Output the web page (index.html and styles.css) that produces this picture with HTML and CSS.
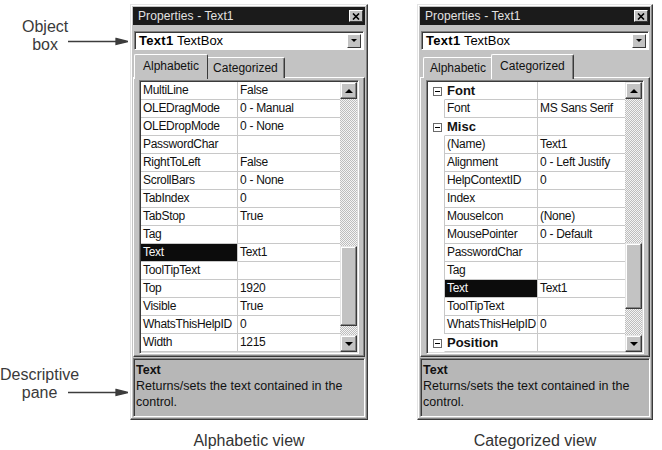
FILE: index.html
```html
<!DOCTYPE html>
<html lang="en">
<head>
    <meta charset="UTF-8">
    <meta name="viewport" content="width=device-width, initial-scale=1.0">
    <title>Properties Window</title>
    <link rel="stylesheet" href="styles.css">
</head>
<body>

    <div class="page">
        <div class="callouts">
            <div class="callout callout-object">
                <div class="callout-text">Object<br>box</div>
                <svg class="arrow" width="60" height="9" viewBox="0 0 60 9">
                    <line x1="0" y1="4.5" x2="50" y2="4.5"/>
                    <polygon points="48,1.5 60,4.5 48,7.5"/>
                </svg>
            </div>
            <div class="callout callout-desc">
                <div class="callout-text">Descriptive<br>pane</div>
                <svg class="arrow" width="60" height="9" viewBox="0 0 60 9">
                    <line x1="0" y1="4.5" x2="50" y2="4.5"/>
                    <polygon points="48,1.5 60,4.5 48,7.5"/>
                </svg>
            </div>
        </div>

        <!-- alphabetic view -->
        <div class="view view-alpha">
            <div class="propwin">
                <div class="titlebar">
                    <span class="title">Properties - Text1</span>
                    <span class="closebtn">
                        <svg width="8" height="7" viewBox="0 0 8 7"><path d="M1 0.5 L7 6.5 M7 0.5 L1 6.5"/></svg>
                    </span>
                </div>
                <div class="objbox">
                    <span class="objname"><b>Text1</b> TextBox</span>
                    <span class="dropbtn"><span class="tri-down small"></span></span>
                </div>
                <div class="tabs">
                    <span class="tab tab-active">Alphabetic</span>
                    <span class="tab tab-edge">Categorized</span>
                </div>
                <div class="tabpage">
                    <div class="grid">
                        <div class="props props-alpha">
                            <div class="row"><span class="cell name">MultiLine</span><span class="cell">False</span></div>
                            <div class="row"><span class="cell name">OLEDragMode</span><span class="cell">0 - Manual</span></div>
                            <div class="row"><span class="cell name">OLEDropMode</span><span class="cell">0 - None</span></div>
                            <div class="row"><span class="cell name">PasswordChar</span><span class="cell"></span></div>
                            <div class="row"><span class="cell name">RightToLeft</span><span class="cell">False</span></div>
                            <div class="row"><span class="cell name">ScrollBars</span><span class="cell">0 - None</span></div>
                            <div class="row"><span class="cell name">TabIndex</span><span class="cell">0</span></div>
                            <div class="row"><span class="cell name">TabStop</span><span class="cell">True</span></div>
                            <div class="row"><span class="cell name">Tag</span><span class="cell"></span></div>
                            <div class="row"><span class="cell name selected">Text</span><span class="cell">Text1</span></div>
                            <div class="row"><span class="cell name">ToolTipText</span><span class="cell"></span></div>
                            <div class="row"><span class="cell name">Top</span><span class="cell">1920</span></div>
                            <div class="row"><span class="cell name">Visible</span><span class="cell">True</span></div>
                            <div class="row"><span class="cell name">WhatsThisHelpID</span><span class="cell">0</span></div>
                            <div class="row"><span class="cell name">Width</span><span class="cell">1215</span></div>
                        </div>
                        <div class="vscroll">
                            <span class="sbtn"><span class="tri-up"></span></span>
                            <span class="track track-alpha"></span>
                            <span class="thumb thumb-alpha"></span>
                            <span class="track track-fill"></span>
                            <span class="sbtn"><span class="tri-down"></span></span>
                        </div>
                    </div>
                </div>
                <div class="desc">
                    <b>Text</b>
                    <p>Returns/sets the text contained in the control.</p>
                </div>
            </div>
            <div class="caption">Alphabetic view</div>
        </div>

        <!-- categorized view -->
        <div class="view view-cat">
            <div class="propwin">
                <div class="titlebar">
                    <span class="title">Properties - Text1</span>
                    <span class="closebtn">
                        <svg width="8" height="7" viewBox="0 0 8 7"><path d="M1 0.5 L7 6.5 M7 0.5 L1 6.5"/></svg>
                    </span>
                </div>
                <div class="objbox">
                    <span class="objname"><b>Text1</b> TextBox</span>
                    <span class="dropbtn"><span class="tri-down small"></span></span>
                </div>
                <div class="tabs">
                    <span class="tab">Alphabetic</span>
                    <span class="tab tab-active tab-edge">Categorized</span>
                </div>
                <div class="tabpage">
                    <div class="grid">
                        <div class="props props-cat">
                            <div class="row cat"><span class="indent"><span class="minus"></span></span><span class="cell name">Font</span><span class="cell"></span></div>
                            <div class="row"><span class="indent"></span><span class="cell name">Font</span><span class="cell">MS Sans Serif</span></div>
                            <div class="row cat"><span class="indent"><span class="minus"></span></span><span class="cell name">Misc</span><span class="cell"></span></div>
                            <div class="row"><span class="indent"></span><span class="cell name">(Name)</span><span class="cell">Text1</span></div>
                            <div class="row"><span class="indent"></span><span class="cell name">Alignment</span><span class="cell">0 - Left Justify</span></div>
                            <div class="row"><span class="indent"></span><span class="cell name">HelpContextID</span><span class="cell">0</span></div>
                            <div class="row"><span class="indent"></span><span class="cell name">Index</span><span class="cell"></span></div>
                            <div class="row"><span class="indent"></span><span class="cell name">MouseIcon</span><span class="cell">(None)</span></div>
                            <div class="row"><span class="indent"></span><span class="cell name">MousePointer</span><span class="cell">0 - Default</span></div>
                            <div class="row"><span class="indent"></span><span class="cell name">PasswordChar</span><span class="cell"></span></div>
                            <div class="row"><span class="indent"></span><span class="cell name">Tag</span><span class="cell"></span></div>
                            <div class="row"><span class="indent"></span><span class="cell name selected">Text</span><span class="cell">Text1</span></div>
                            <div class="row"><span class="indent"></span><span class="cell name">ToolTipText</span><span class="cell"></span></div>
                            <div class="row"><span class="indent"></span><span class="cell name">WhatsThisHelpID</span><span class="cell">0</span></div>
                            <div class="row cat"><span class="indent"><span class="minus"></span></span><span class="cell name">Position</span><span class="cell"></span></div>
                        </div>
                        <div class="vscroll">
                            <span class="sbtn"><span class="tri-up"></span></span>
                            <span class="track track-cat"></span>
                            <span class="thumb thumb-cat"></span>
                            <span class="track track-fill"></span>
                            <span class="sbtn"><span class="tri-down"></span></span>
                        </div>
                    </div>
                </div>
                <div class="desc">
                    <b>Text</b>
                    <p>Returns/sets the text contained in the control.</p>
                </div>
            </div>
            <div class="caption">Categorized view</div>
        </div>
    </div>

</body>
</html>
```

FILE: styles.css
```css
body{
    margin: 0;
    background-color: #fff;
    font-family: "Liberation Sans", Arial, sans-serif;
}
.page{
    display: flex;
    align-items: flex-start;
    width: 662px;
    height: 450px;
    overflow: hidden;
}

/* labels with arrows on the left */
.callouts{
    width: 130px;
    flex-shrink: 0;
    display: flex;
    flex-direction: column;
    font-size: 16px;
    line-height: 18px;
    color: #3a3a3a;
}
.callout{
    display: flex;
    align-items: flex-start;
}
.callout-text{
    text-align: center;
    white-space: nowrap;
}
.arrow{
    flex-shrink: 0;
    stroke: #3c3c3c;
    stroke-width: 1.3;
    fill: #3c3c3c;
}
.callout-object{
    margin-top: 18px;
    padding-left: 22px;
}
.callout-object .arrow{
    margin-top: 18.5px;
}
.callout-desc{
    margin-top: 312px;
}
.callout-desc .arrow{
    margin-top: 21.5px;
    margin-left: -11px;
}

.view{
    display: flex;
    flex-direction: column;
    flex-shrink: 0;
}
.view-alpha{
    width: 238px;
}
.view-cat{
    width: 236px;
    margin-left: 49px;
}
.caption{
    margin-top: 11px;
    font-size: 16px;
    line-height: 20px;
    text-align: center;
    color: #333;
}

/* the properties window */
.propwin{
    margin-top: 4px;
    padding: 2px;
    background-color: #c3c3c3;
    border: 1px solid;
    border-color: #e4e4e4 #3a3a3a #3a3a3a #e4e4e4;
    box-shadow: inset -1px -1px #858585, inset 1px 1px #fff;
    font-size: 12px;
}
.titlebar{
    height: 18px;
    display: flex;
    align-items: center;
    justify-content: space-between;
    padding: 0 2px 0 5px;
    background-color: #1b1b1b;
    color: #e2e2e2;
    letter-spacing: 0.1px;
}
.closebtn{
    width: 14px;
    height: 12px;
    box-sizing: border-box;
    display: flex;
    align-items: center;
    justify-content: center;
    background-color: #c3c3c3;
    border: 1px solid;
    border-color: #fff #3a3a3a #3a3a3a #fff;
}
.closebtn svg{
    stroke: #000;
    stroke-width: 1.6;
}
.objbox{
    height: 19px;
    box-sizing: border-box;
    margin: 6px 1px 0;
    display: flex;
    align-items: center;
    justify-content: space-between;
    padding: 0 2px 0 4px;
    background-color: #fff;
    border: 1px solid;
    border-color: #808080 #fff #fff #808080;
    box-shadow: inset 1px 1px #3a3a3a;
    font-size: 13px;
}
.objname b{
    letter-spacing: 0.3px;
}
.dropbtn{
    width: 14px;
    height: 14px;
    box-sizing: border-box;
    display: flex;
    align-items: center;
    justify-content: center;
    background-color: #c3c3c3;
    border: 1px solid;
    border-color: #fff #3a3a3a #3a3a3a #fff;
}

/* tab strip */
.tabs{
    height: 24px;
    margin-top: 4px;
    display: flex;
    align-items: flex-end;
    padding-left: 3px;
    position: relative;
    z-index: 1;
}
.tab{
    height: 21px;
    box-sizing: border-box;
    display: flex;
    align-items: center;
    padding: 0 6px;
    background-color: #c3c3c3;
    border: 1px solid;
    border-bottom: none;
    border-color: #fff #3a3a3a #fff #fff;
    border-radius: 2px 2px 0 0;
    color: #111;
}
.tab-edge{
    box-shadow: inset -1px 0 #808080;
}
.tab-active{
    height: 25px;
    margin: 0 -2px -1px;
    padding: 0 8px 2px;
    position: relative;
    z-index: 2;
}
.tabpage{
    margin-top: -1px;
    padding: 2px 5px;
    background-color: #c3c3c3;
    border: 1px solid;
    border-color: #fff #3a3a3a #3a3a3a #fff;
    box-shadow: inset -1px -1px #858585;
}

/* property grid */
.grid{
    height: 274px;
    box-sizing: border-box;
    display: flex;
    padding: 1px;
    background-color: #fff;
    border: 1px solid;
    border-color: #808080 #fff #fff #808080;
    box-shadow: inset 1px 1px #3a3a3a, inset -1px -1px #dcdcdc;
}
.props{
    flex: 1;
    min-width: 0;
    letter-spacing: -0.3px;
    color: #111;
}
.row{
    display: grid;
    height: 18px;
}
.props-alpha .row{
    grid-template-columns: 97px 1fr;
}
.props-cat .row{
    grid-template-columns: 16px 94px 1fr;
}
.cell{
    box-sizing: border-box;
    line-height: 17px;
    padding-left: 2px;
    border-bottom: 1px solid #c8c8c8;
    white-space: nowrap;
    overflow: hidden;
}
.cell.name{
    border-right: 1px solid #c8c8c8;
}
.props-cat .cell.name{
    border-left: 1px solid #c8c8c8;
}
.props-cat .row.cat .cell.name{
    border-left-color: transparent;
    font-weight: bold;
    font-size: 13px;
    letter-spacing: 0;
}
.cell.selected{
    background-color: #0c0c0c;
    color: #f4f4f4;
}
.indent{
    display: flex;
    align-items: center;
    justify-content: center;
    padding-left: 2px;
}
.minus{
    width: 9px;
    height: 9px;
    box-sizing: border-box;
    border: 1px solid #6a6a6a;
    display: flex;
    align-items: center;
    justify-content: center;
}
.minus::after{
    content: "";
    width: 5px;
    height: 1px;
    background-color: #000;
}

/* vertical scroll bar */
.vscroll{
    width: 17px;
    display: flex;
    flex-direction: column;
}
.sbtn,
.thumb{
    box-sizing: border-box;
    background-color: #c3c3c3;
    border: 1px solid;
    border-color: #e6e6e6 #3a3a3a #3a3a3a #e6e6e6;
    box-shadow: inset -1px -1px #858585, inset 1px 1px #fff;
}
.sbtn{
    height: 17px;
    display: flex;
    align-items: center;
    justify-content: center;
    flex-shrink: 0;
}
.track{
    background: repeating-conic-gradient(#bdbdbd 0 25%, #f4f4f4 0 50%) 0 0 / 2px 2px;
}
.track-alpha{
    height: 147px;
}
.thumb-alpha{
    height: 80px;
}
.track-cat{
    height: 144px;
}
.thumb-cat{
    height: 66px;
}
.track-fill{
    flex: 1;
}
.tri-up,
.tri-down{
    width: 0;
    height: 0;
    border-left: 4px solid transparent;
    border-right: 4px solid transparent;
}
.tri-up{
    border-bottom: 4px solid #000;
}
.tri-down{
    border-top: 4px solid #000;
}
.tri-down.small{
    border-left-width: 3px;
    border-right-width: 3px;
    border-top-width: 3px;
}

/* description pane */
.desc{
    height: 59px;
    box-sizing: border-box;
    margin-top: 1px;
    padding: 3px 2px;
    background-color: #b7b7b7;
    border: 1px solid;
    border-color: #808080 #fff #fff #808080;
    box-shadow: inset 1px 1px #3a3a3a;
    font-size: 12.5px;
    line-height: 16px;
    color: #111;
}
.desc b{
    display: block;
}
.desc p{
    margin: 0;
}
```
